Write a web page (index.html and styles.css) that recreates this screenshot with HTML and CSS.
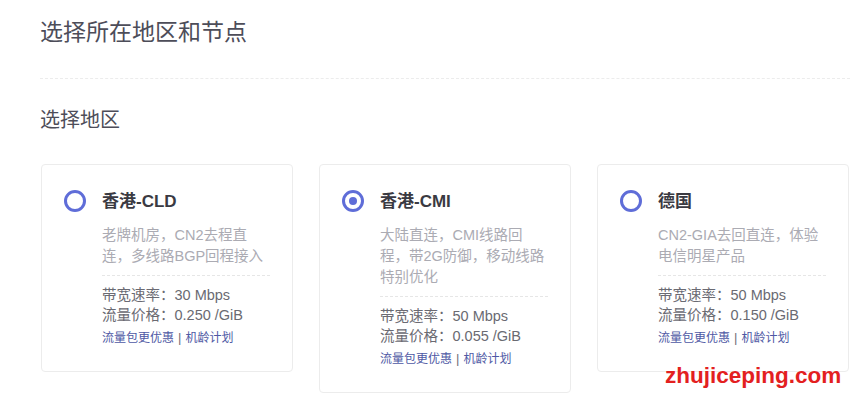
FILE: index.html
```html
<!DOCTYPE html>
<html lang="zh-CN">
<head>
<meta charset="utf-8">
<title>选择所在地区和节点</title>
<link rel="stylesheet" href="styles.css">
</head>
<body>
<div class="page">
  <h1 class="title">选择所在地区和节点</h1>
  <div class="divider"></div>
  <h2 class="subtitle">选择地区</h2>
  <div class="cards">
    <div class="card">
      <span class="radio"></span>
      <div class="card-body">
        <div class="card-name">香港-CLD</div>
        <div class="card-desc">老牌机房，CN2去程直连，多线路BGP回程接入</div>
        <div class="card-sep"></div>
        <div class="stat">带宽速率：30 Mbps</div>
        <div class="stat">流量价格：0.250 /GiB</div>
        <div class="links"><span class="link">流量包更优惠</span><span class="bar">|</span><span class="link">机龄计划</span></div>
      </div>
    </div>
    <div class="card">
      <span class="radio checked"></span>
      <div class="card-body">
        <div class="card-name">香港-CMI</div>
        <div class="card-desc">大陆直连，CMI线路回程，带2G防御，移动线路特别优化</div>
        <div class="card-sep"></div>
        <div class="stat">带宽速率：50 Mbps</div>
        <div class="stat">流量价格：0.055 /GiB</div>
        <div class="links"><span class="link">流量包更优惠</span><span class="bar">|</span><span class="link">机龄计划</span></div>
      </div>
    </div>
    <div class="card">
      <span class="radio"></span>
      <div class="card-body">
        <div class="card-name">德国</div>
        <div class="card-desc">CN2-GIA去回直连，体验电信明星产品</div>
        <div class="card-sep"></div>
        <div class="stat">带宽速率：50 Mbps</div>
        <div class="stat">流量价格：0.150 /GiB</div>
        <div class="links"><span class="link">流量包更优惠</span><span class="bar">|</span><span class="link">机龄计划</span></div>
      </div>
    </div>
  </div>
</div>
<div class="watermark">zhujiceping.com</div>
</body>
</html>
```

FILE: styles.css
```css
* { box-sizing: border-box; }
html, body { margin: 0; padding: 0; background: #fff; }
body {
  font-family: "Liberation Sans", "Noto Sans CJK SC", sans-serif;
  width: 850px;
  height: 403px;
  overflow: hidden;
  position: relative;
}
.page { padding-left: 40px; }
.title {
  margin: 16px 0 0;
  font-size: 23px;
  line-height: 32px;
  font-weight: normal;
  color: #4d4d59;
}
.divider {
  margin-top: 30px;
  border-top: 1px dashed #ececec;
}
.subtitle {
  margin: 27px 0 0;
  font-size: 20px;
  line-height: 28px;
  font-weight: normal;
  color: #4d4d59;
}
.cards {
  margin-top: 30px;
  padding-left: 1px;
  display: flex;
  gap: 26px;
  align-items: flex-start;
}
.card {
  width: 252px;
  flex: none;
  border: 1px solid #ececec;
  border-radius: 4px;
  padding: 25px 22px 24px 22px;
  display: flex;
  gap: 16px;
}
.radio {
  flex: none;
  width: 22px;
  height: 22px;
  border: 3px solid #5f6dd8;
  border-radius: 50%;
  display: flex;
  align-items: center;
  justify-content: center;
}
.radio.checked::after {
  content: "";
  width: 8px;
  height: 8px;
  border-radius: 50%;
  background: #5f6dd8;
}
.card-body { flex: 1; min-width: 0; }
.card-name {
  font-size: 17px;
  line-height: 24px;
  font-weight: bold;
  color: #3a3a42;
}
.card-desc {
  margin-top: 11px;
  font-size: 14.5px;
  line-height: 21px;
  color: #ababb3;
}
.card-sep {
  margin-top: 8px;
  border-top: 1px dashed #e6e6e6;
  margin-bottom: 9px;
}
.stat {
  font-size: 14.5px;
  line-height: 20px;
  color: #6a6a72;
}
.links {
  margin-top: 4px;
  font-size: 12px;
  line-height: 18px;
  display: flex;
  align-items: center;
}
.link { color: #4e58a4; }
.bar { color: #707078; margin: 0 4px; font-size: 13px; }
.watermark {
  position: absolute;
  left: 665px;
  top: 363px;
  font-family: "Liberation Sans", sans-serif;
  font-weight: bold;
  font-size: 22.5px;
  line-height: 26px;
  color: #e3201f;
}
```
